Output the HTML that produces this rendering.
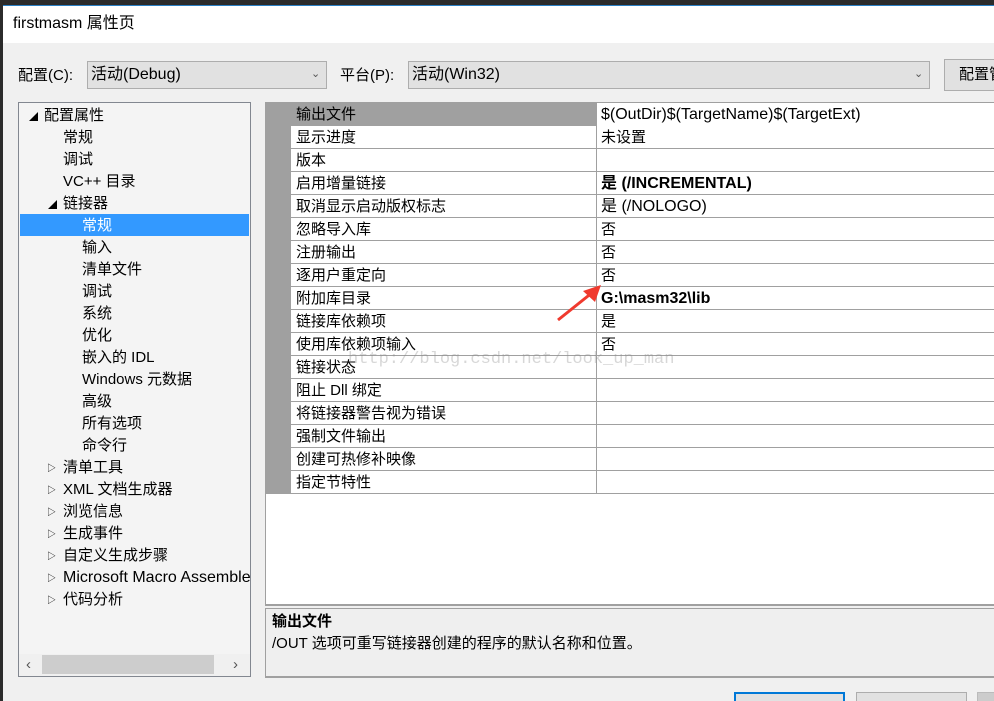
<!DOCTYPE html>
<html><head><meta charset="utf-8"><style>
*{margin:0;padding:0;box-sizing:border-box}
html,body{width:994px;height:701px;overflow:hidden}
body{background:#f0f0f0;font-family:"Liberation Sans","Noto Sans CJK SC",sans-serif;font-size:15px;color:#000;position:relative}
.a{position:absolute}
.t{position:absolute;white-space:nowrap;line-height:22px}
.l{font-size:16px}
.row{position:absolute;left:291px;width:703px;height:23px;border-bottom:1px solid #a0a0a0;background:#fff}
.row .n{position:absolute;left:5px;top:1px;line-height:22px}
.row .v{position:absolute;left:305px;top:0;line-height:24px;border-left:1px solid #a0a0a0;padding-left:4px;height:23px;width:400px}
.tri{position:absolute;font-size:9px}
</style></head><body>
<div class="a" style="left:0;top:0;width:994px;height:5px;background:#2b2b2b"></div>
<div class="a" style="left:0;top:0;width:3px;height:701px;background:#2b2b2b"></div>
<div class="a" style="left:3px;top:5px;width:991px;height:38px;background:#fff;border-top:1px solid #2a7fc4"></div>
<div class="t" style="left:13px;top:13px;font-size:16px">firstmasm 属性页</div>

<div class="t" style="left:18px;top:65px">配置(C):</div>
<div class="a" style="left:87px;top:61px;width:240px;height:28px;background:#e1e1e1;border:1px solid #adadad"></div>
<div class="t l" style="left:91px;top:64px">活动(Debug)</div>
<div class="t" style="left:311px;top:63px;font-size:11px;color:#555">&#8964;</div>
<div class="t" style="left:340px;top:65px">平台(P):</div>
<div class="a" style="left:408px;top:61px;width:522px;height:28px;background:#e1e1e1;border:1px solid #adadad"></div>
<div class="t l" style="left:412px;top:64px">活动(Win32)</div>
<div class="t" style="left:914px;top:63px;font-size:11px;color:#555">&#8964;</div>
<div class="a" style="left:944px;top:59px;width:60px;height:32px;background:#e1e1e1;border:1px solid #adadad"></div>
<div class="t" style="left:959px;top:64px">配置管</div>

<!-- tree -->
<div class="a" style="left:18px;top:102px;width:233px;height:575px;background:#f4f4f4;border:1px solid #828790"></div>
<div class="a" style="left:20px;top:214px;width:229px;height:22px;background:#3399ff"></div>
<div class="tri" style="left:29px;top:110px">&#9698;</div>
<div class="t" style="left:44px;top:105px">配置属性</div>
<div class="t" style="left:63px;top:127px">常规</div>
<div class="t" style="left:63px;top:149px">调试</div>
<div class="t" style="left:63px;top:171px">VC++ 目录</div>
<div class="tri" style="left:48px;top:198px">&#9698;</div>
<div class="t" style="left:63px;top:193px">链接器</div>
<div class="t" style="left:82px;top:215px;color:#fff">常规</div>
<div class="t" style="left:82px;top:237px">输入</div>
<div class="t" style="left:82px;top:259px">清单文件</div>
<div class="t" style="left:82px;top:281px">调试</div>
<div class="t" style="left:82px;top:303px">系统</div>
<div class="t" style="left:82px;top:325px">优化</div>
<div class="t" style="left:82px;top:347px">嵌入的 IDL</div>
<div class="t" style="left:82px;top:369px">Windows 元数据</div>
<div class="t" style="left:82px;top:391px">高级</div>
<div class="t" style="left:82px;top:413px">所有选项</div>
<div class="t" style="left:82px;top:435px">命令行</div>
<div class="tri" style="left:47px;top:461px">&#9655;</div><div class="t" style="left:63px;top:457px">清单工具</div>
<div class="tri" style="left:47px;top:483px">&#9655;</div><div class="t" style="left:63px;top:479px">XML 文档生成器</div>
<div class="tri" style="left:47px;top:505px">&#9655;</div><div class="t" style="left:63px;top:501px">浏览信息</div>
<div class="tri" style="left:47px;top:527px">&#9655;</div><div class="t" style="left:63px;top:523px">生成事件</div>
<div class="tri" style="left:47px;top:549px">&#9655;</div><div class="t" style="left:63px;top:545px">自定义生成步骤</div>
<div class="tri" style="left:47px;top:571px">&#9655;</div><div class="t l" style="left:63px;top:567px;width:187px;overflow:hidden">Microsoft Macro Assembler</div>
<div class="tri" style="left:47px;top:593px">&#9655;</div><div class="t" style="left:63px;top:589px">代码分析</div>
<div class="a" style="left:19px;top:654px;width:231px;height:22px;background:#f0f0f0"></div>
<div class="a" style="left:42px;top:655px;width:172px;height:19px;background:#cdcdcd"></div>
<div class="t" style="left:26px;top:654px;color:#555">&#8249;</div>
<div class="t" style="left:233px;top:654px;color:#555">&#8250;</div>

<!-- grid -->
<div class="a" style="left:265px;top:102px;width:729px;height:504px;background:#fff;border-top:1px solid #a0a0a0;border-left:1px solid #a0a0a0;border-bottom:2px solid #a0a0a0"></div>
<div class="a" style="left:266px;top:103px;width:25px;height:391px;background:#a0a0a0"></div>
<div class="row" style="top:103px;background:#a0a0a0"><span class="n">输出文件</span><span class="v l" style="background:#fff">$(OutDir)$(TargetName)$(TargetExt)</span></div>
<div class="row" style="top:126px"><span class="n">显示进度</span><span class="v">未设置</span></div>
<div class="row" style="top:149px"><span class="n">版本</span><span class="v"></span></div>
<div class="row" style="top:172px"><span class="n">启用增量链接</span><span class="v l" style="font-weight:bold">是 (/INCREMENTAL)</span></div>
<div class="row" style="top:195px"><span class="n">取消显示启动版权标志</span><span class="v l">是 (/NOLOGO)</span></div>
<div class="row" style="top:218px"><span class="n">忽略导入库</span><span class="v">否</span></div>
<div class="row" style="top:241px"><span class="n">注册输出</span><span class="v">否</span></div>
<div class="row" style="top:264px"><span class="n">逐用户重定向</span><span class="v">否</span></div>
<div class="row" style="top:287px"><span class="n">附加库目录</span><span class="v l" style="font-weight:bold">G:\masm32\lib</span></div>
<div class="row" style="top:310px"><span class="n">链接库依赖项</span><span class="v">是</span></div>
<div class="row" style="top:333px"><span class="n">使用库依赖项输入</span><span class="v">否</span></div>
<div class="row" style="top:356px"><span class="n">链接状态</span><span class="v"></span></div>
<div class="row" style="top:379px"><span class="n">阻止 Dll 绑定</span><span class="v"></span></div>
<div class="row" style="top:402px"><span class="n">将链接器警告视为错误</span><span class="v"></span></div>
<div class="row" style="top:425px"><span class="n">强制文件输出</span><span class="v"></span></div>
<div class="row" style="top:448px"><span class="n">创建可热修补映像</span><span class="v"></span></div>
<div class="row" style="top:471px"><span class="n">指定节特性</span><span class="v"></span></div>
<div class="t" style="left:348px;top:349px;font-family:'Liberation Mono',monospace;font-size:17px;color:rgba(140,140,140,0.35)">http://blog.csdn.net/look_up_man</div>
<svg class="a" style="left:555px;top:282px" width="50" height="42"><line x1="3" y1="38" x2="38" y2="10" stroke="#f03a2e" stroke-width="3"/><polygon points="46,3 28,9 40,20" fill="#f03a2e"/></svg>

<!-- description -->
<div class="a" style="left:265px;top:608px;width:729px;height:70px;background:#efefef;border-top:1px solid #a0a0a0;border-left:1px solid #a0a0a0;border-bottom:2px solid #a0a0a0"></div>
<div class="t" style="left:272px;top:611px;font-weight:bold">输出文件</div>
<div class="t" style="left:272px;top:633px">/OUT 选项可重写链接器创建的程序的默认名称和位置。</div>

<div class="a" style="left:734px;top:692px;width:111px;height:20px;background:#e1e1e1;border:2px solid #0078d7"></div>
<div class="a" style="left:856px;top:692px;width:111px;height:20px;background:#e1e1e1;border:1px solid #adadad"></div>
<div class="a" style="left:977px;top:692px;width:30px;height:20px;background:#ccc;border:1px solid #bbb"></div>
</body></html>
